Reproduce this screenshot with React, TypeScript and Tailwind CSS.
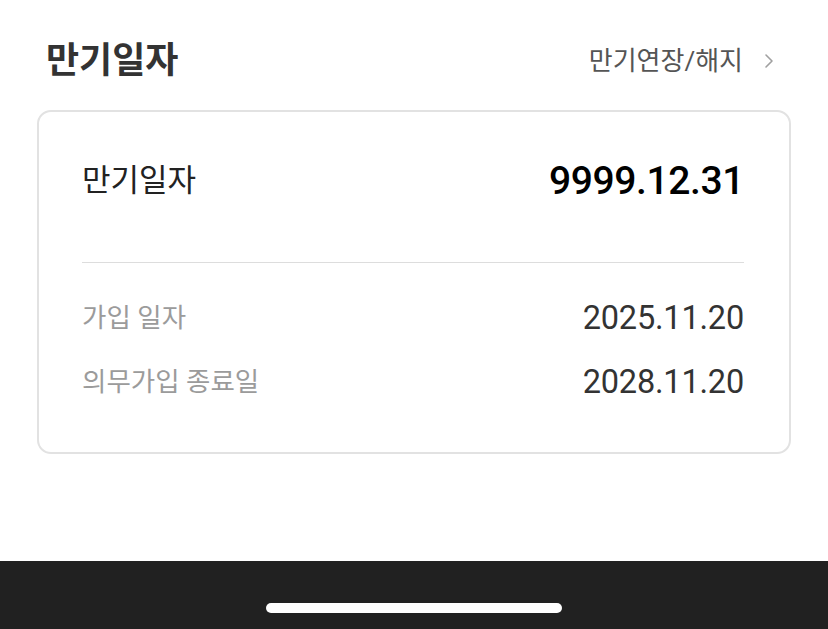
import { ChevronRight } from 'lucide-react';

const font = "font-['Roboto','Noto_Sans_CJK_KR',sans-serif]";

type RowProps = {
  label: string;
  value: string;
};

function InfoRow({ label, value }: RowProps) {
  return (
    <div className="flex h-[40px] items-center justify-between">
      <span className="text-[26.5px] text-[#9b9b9b]">{label}</span>
      <span className="text-[32.5px] tracking-[-0.2px] text-[#333333]">{value}</span>
    </div>
  );
}

export default function App() {
  return (
    <div className={`flex h-[629px] w-full flex-col bg-white ${font}`}>
      {/* 헤더 */}
      <div className="flex h-[44px] mt-[39px] items-center justify-between pl-[46px] pr-[47px]">
        <h1 className="text-[36px] font-bold leading-[44px] text-[#333333]">만기일자</h1>
        <button className="flex items-center text-[26px] text-[#555555]">
          만기연장/해지
          <ChevronRight className="ml-[14px] h-[24px] w-[24px] text-[#a0a0a0]" strokeWidth={1.6} />
        </button>
      </div>

      {/* 카드 */}
      <div className="mx-[37px] mt-[27px] h-[344px] rounded-[14px] border-2 border-[#e2e2e2] pl-[43px] pr-[45px] pt-[45px]">
        <div className="flex h-[48px] items-center justify-between">
          <span className="text-[31px] text-[#222222]">만기일자</span>
          <span className="text-[39px] font-medium tracking-[-0.4px] text-black">9999.12.31</span>
        </div>
        <div className="mt-[57px] h-px bg-[#dddddd]" />
        <div className="mt-[35px] flex flex-col gap-[24px]">
          <InfoRow label="가입 일자" value="2025.11.20" />
          <InfoRow label="의무가입 종료일" value="2028.11.20" />
        </div>
      </div>

      <div className="flex-1" />

      {/* 하단 내비게이션 바 */}
      <div className="flex h-[68px] justify-center bg-[#212121] pt-[42px]">
        <div className="h-[10px] w-[296px] rounded-full bg-white" />
      </div>
    </div>
  );
}
